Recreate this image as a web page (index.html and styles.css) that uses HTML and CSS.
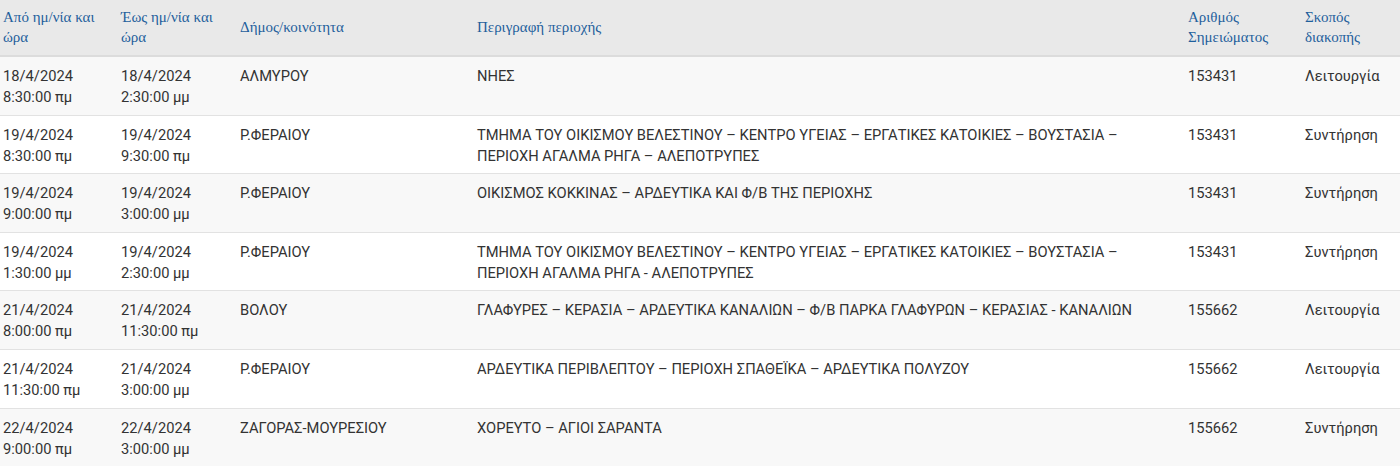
FILE: index.html
```html
<!DOCTYPE html>
<html lang="el">
<head>
    <meta charset="UTF-8">
    <meta name="viewport" content="width=device-width, initial-scale=1.0">
    <title>Προγραμματισμένες διακοπές ρεύματος</title>
    <link rel="stylesheet" href="styles.css">
</head>
<body>
    <table class="outages">
        <thead>
            <tr>
                <th class="col-from">Από ημ/νία και ώρα</th>
                <th class="col-to">Έως ημ/νία και ώρα</th>
                <th class="col-area">Δήμος/κοινότητα</th>
                <th class="col-desc">Περιγραφή περιοχής</th>
                <th class="col-note">Αριθμός Σημειώματος</th>
                <th class="col-reason">Σκοπός διακοπής</th>
            </tr>
        </thead>
        <tbody>
            <tr>
                <td>18/4/2024 8:30:00 πμ</td>
                <td>18/4/2024 2:30:00 μμ</td>
                <td>ΑΛΜΥΡΟΥ</td>
                <td>ΝΗΕΣ</td>
                <td>153431</td>
                <td>Λειτουργία</td>
            </tr>
            <tr>
                <td>19/4/2024 8:30:00 πμ</td>
                <td>19/4/2024 9:30:00 πμ</td>
                <td>Ρ.ΦΕΡΑΙΟΥ</td>
                <td>ΤΜΗΜΑ ΤΟΥ ΟΙΚΙΣΜΟΥ ΒΕΛΕΣΤΙΝΟΥ – ΚΕΝΤΡΟ ΥΓΕΙΑΣ – ΕΡΓΑΤΙΚΕΣ ΚΑΤΟΙΚΙΕΣ – ΒΟΥΣΤΑΣΙΑ – ΠΕΡΙΟΧΗ ΑΓΑΛΜΑ ΡΗΓΑ – ΑΛΕΠΟΤΡΥΠΕΣ</td>
                <td>153431</td>
                <td>Συντήρηση</td>
            </tr>
            <tr>
                <td>19/4/2024 9:00:00 πμ</td>
                <td>19/4/2024 3:00:00 μμ</td>
                <td>Ρ.ΦΕΡΑΙΟΥ</td>
                <td>ΟΙΚΙΣΜΟΣ ΚΟΚΚΙΝΑΣ – ΑΡΔΕΥΤΙΚΑ ΚΑΙ Φ/Β ΤΗΣ ΠΕΡΙΟΧΗΣ</td>
                <td>153431</td>
                <td>Συντήρηση</td>
            </tr>
            <tr>
                <td>19/4/2024 1:30:00 μμ</td>
                <td>19/4/2024 2:30:00 μμ</td>
                <td>Ρ.ΦΕΡΑΙΟΥ</td>
                <td>ΤΜΗΜΑ ΤΟΥ ΟΙΚΙΣΜΟΥ ΒΕΛΕΣΤΙΝΟΥ – ΚΕΝΤΡΟ ΥΓΕΙΑΣ – ΕΡΓΑΤΙΚΕΣ ΚΑΤΟΙΚΙΕΣ – ΒΟΥΣΤΑΣΙΑ – ΠΕΡΙΟΧΗ ΑΓΑΛΜΑ ΡΗΓΑ - ΑΛΕΠΟΤΡΥΠΕΣ</td>
                <td>153431</td>
                <td>Συντήρηση</td>
            </tr>
            <tr>
                <td>21/4/2024 8:00:00 πμ</td>
                <td>21/4/2024 11:30:00 πμ</td>
                <td>ΒΟΛΟΥ</td>
                <td>ΓΛΑΦΥΡΕΣ – ΚΕΡΑΣΙΑ – ΑΡΔΕΥΤΙΚΑ ΚΑΝΑΛΙΩΝ – Φ/Β ΠΑΡΚΑ ΓΛΑΦΥΡΩΝ – ΚΕΡΑΣΙΑΣ - ΚΑΝΑΛΙΩΝ</td>
                <td>155662</td>
                <td>Λειτουργία</td>
            </tr>
            <tr>
                <td>21/4/2024 11:30:00 πμ</td>
                <td>21/4/2024 3:00:00 μμ</td>
                <td>Ρ.ΦΕΡΑΙΟΥ</td>
                <td>ΑΡΔΕΥΤΙΚΑ ΠΕΡΙΒΛΕΠΤΟΥ – ΠΕΡΙΟΧΗ ΣΠΑΘΕΪΚΑ – ΑΡΔΕΥΤΙΚΑ ΠΟΛΥΖΟΥ</td>
                <td>155662</td>
                <td>Λειτουργία</td>
            </tr>
            <tr>
                <td>22/4/2024 9:00:00 πμ</td>
                <td>22/4/2024 3:00:00 μμ</td>
                <td>ΖΑΓΟΡΑΣ-ΜΟΥΡΕΣΙΟΥ</td>
                <td>ΧΟΡΕΥΤΟ – ΑΓΙΟΙ ΣΑΡΑΝΤΑ</td>
                <td>155662</td>
                <td>Συντήρηση</td>
            </tr>
        </tbody>
    </table>
</body>
</html>
```

FILE: styles.css
```css
body {
    margin: 0;
    padding: 0;
    background: #ffffff;
    font-family: Roboto, "Liberation Sans", sans-serif;
    color: #333333;
}

.outages {
    width: 1400px;
    border-collapse: collapse;
    table-layout: fixed;
}

.outages th,
.outages td {
    text-align: left;
}

.outages th {
    padding: 7px 3px 8px;
    background: #e9e9e9;
    color: #1f5f9c;
    font-family: "Liberation Serif", "DejaVu Serif", serif;
    font-weight: normal;
    font-size: 15px;
    line-height: 20px;
    vertical-align: middle;
    border-bottom: 2px solid #dcdcdc;
}

.outages td {
    padding: 9px 3px 6.6px;
    font-size: 14.7px;
    line-height: 21px;
    vertical-align: top;
    border-top: 1px solid #e2e2e2;
}

.outages tbody tr:nth-child(odd) {
    background: #f8f8f8;
}

.col-from { width: 112px; }
.col-to { width: 113px; }
.col-area { width: 231px; }
.col-desc { width: 705px; }
.col-note { width: 111px; }
.col-reason { width: 92px; }
```
